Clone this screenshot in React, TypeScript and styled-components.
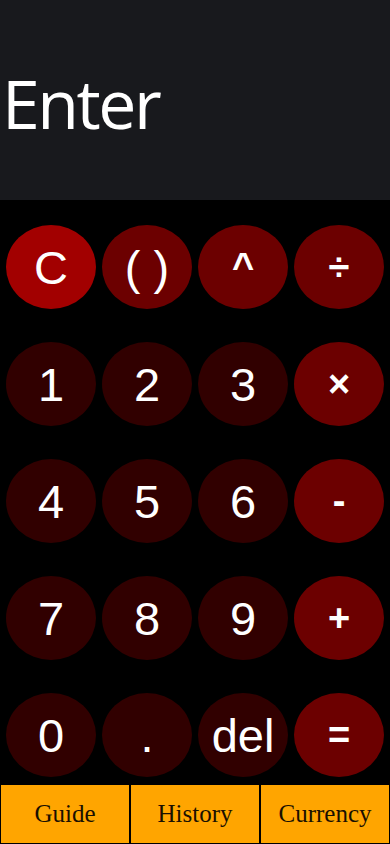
import styled, {createGlobalStyle} from "styled-components";

const GlobalStyle = createGlobalStyle`
  html, body {
    margin: 0;
    padding: 0;
    background: #000;
  }

  #root {
    width: 100%;
    min-height: 100vh;
  }
`;

type Tone = 'clear' | 'op' | 'digit';

const keys: { label: string; tone: Tone }[] = [
    {label: 'C', tone: 'clear'},
    {label: '( )', tone: 'op'},
    {label: '^', tone: 'op'},
    {label: '÷', tone: 'op'},
    {label: '1', tone: 'digit'},
    {label: '2', tone: 'digit'},
    {label: '3', tone: 'digit'},
    {label: '×', tone: 'op'},
    {label: '4', tone: 'digit'},
    {label: '5', tone: 'digit'},
    {label: '6', tone: 'digit'},
    {label: '-', tone: 'op'},
    {label: '7', tone: 'digit'},
    {label: '8', tone: 'digit'},
    {label: '9', tone: 'digit'},
    {label: '+', tone: 'op'},
    {label: '0', tone: 'digit'},
    {label: '.', tone: 'digit'},
    {label: 'del', tone: 'digit'},
    {label: '=', tone: 'op'},
];

// operators drawn as symbols get a heavier, smaller glyph
const symbols = ['^', '÷', '×', '-', '+', '='];

const toneColors: Record<Tone, string> = {
    clear: '#a20000',
    op: '#6c0000',
    digit: '#310000',
};

export default function App() {
    return (
        <>
            <GlobalStyle/>
            <Wrapper>
                <Display>
                    <Screen>Enter</Screen>
                </Display>
                <Keypad>
                    {keys.map((key) => (
                        <Key key={key.label} $tone={key.tone} $symbol={symbols.includes(key.label)}>
                            {key.label}
                        </Key>
                    ))}
                </Keypad>
                <Footer>
                    <FooterButton>Guide</FooterButton>
                    <FooterButton>History</FooterButton>
                    <FooterButton>Currency</FooterButton>
                </Footer>
            </Wrapper>
        </>
    );
}

const Wrapper = styled.div`
  width: 390px;
  height: 844px;
  display: flex;
  flex-direction: column;
  background: #000;
  overflow: hidden;
`;

const Display = styled.div`
  height: 200px;
  background: #18191d;
  display: flex;
  align-items: center;
`;

const Screen = styled.div`
  color: #fff;
  font-family: "Open Sans", "Noto Sans", sans-serif;
  font-size: 68px;
  letter-spacing: -2.5px;
  line-height: 1;
  padding-left: 2px;
  margin-top: 6px;
`;

const Keypad = styled.div`
  flex: 1;
  display: grid;
  grid-template-columns: repeat(4, 90px);
  grid-auto-rows: 84px;
  column-gap: 6px;
  row-gap: 33px;
  padding: 25px 6px 0;
`;

const Key = styled.button<{ $tone: Tone; $symbol: boolean }>`
  border: none;
  border-radius: 50%;
  background: ${({$tone}) => toneColors[$tone]};
  color: #fff;
  font-family: "Liberation Sans", Arial, sans-serif;
  font-size: ${({$symbol}) => ($symbol ? '38px' : '47px')};
  font-weight: ${({$symbol}) => ($symbol ? 700 : 400)};
  padding: 0;
  display: flex;
  align-items: center;
  justify-content: center;
  cursor: pointer;
`;

const Footer = styled.div`
  height: 60px;
  display: grid;
  grid-template-columns: repeat(3, 1fr);
  background: #ffa500;
`;

const FooterButton = styled.button`
  background: #ffa500;
  border: 1px solid #000;
  color: #1a1000;
  font-family: "Liberation Serif", "Times New Roman", serif;
  font-size: 25px;
  padding: 0 0 1px;
  cursor: pointer;
`;
